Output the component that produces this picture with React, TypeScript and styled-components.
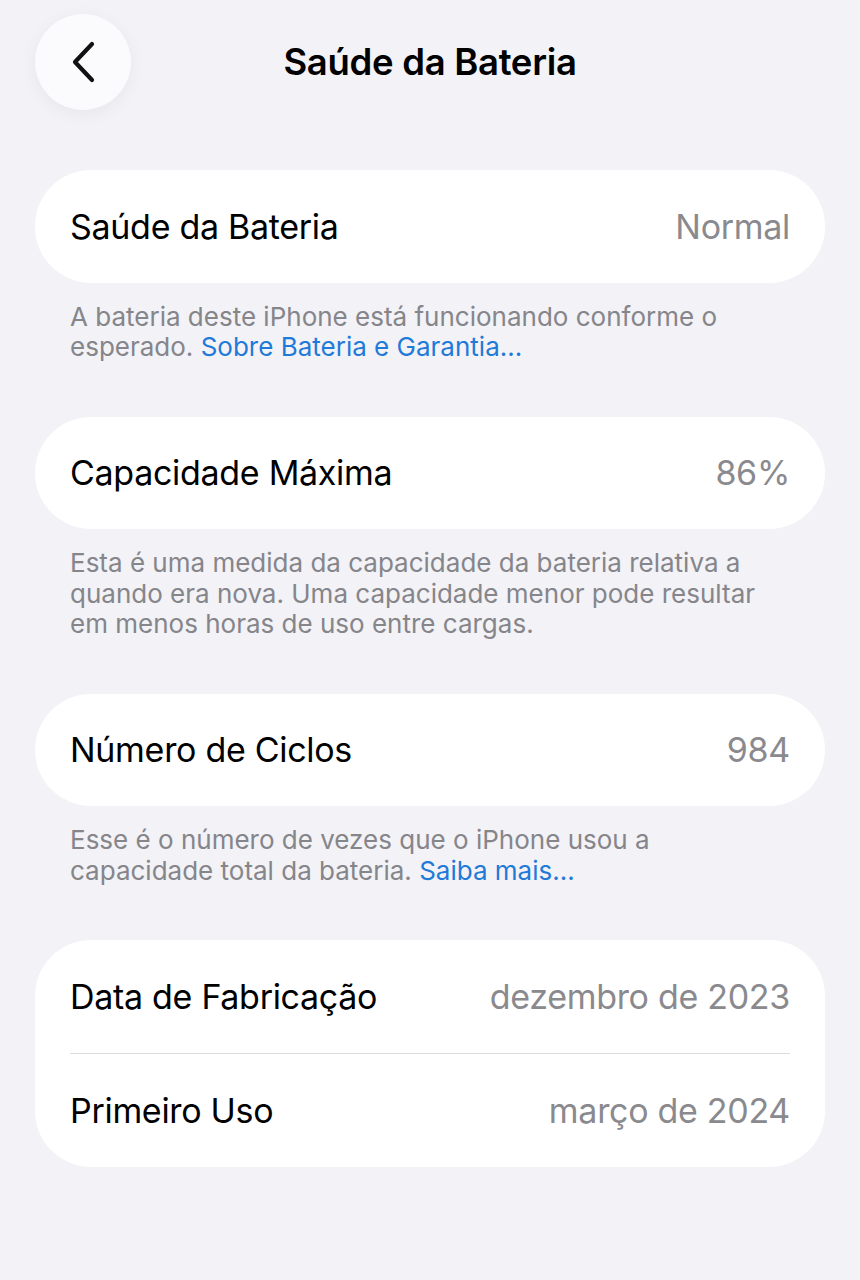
import React from 'react';
import styled, { createGlobalStyle } from 'styled-components';

const GlobalStyle = createGlobalStyle`
  html, body {
    margin: 0;
    padding: 0;
    background: #f2f2f7;
  }
  body {
    font-family: Inter, "Noto Sans", "Liberation Sans", sans-serif;
    -webkit-font-smoothing: antialiased;
  }
`;

const Page = styled.div`
  width: 860px;
  min-height: 1280px;
  background: #f2f2f7;
  box-sizing: border-box;
  padding-bottom: 40px;
`;

const Header = styled.header`
  display: grid;
  grid-template-columns: 96px 1fr 96px;
  align-items: center;
  align-content: start;
  padding: 14px 35px 0;
  height: 170px;
  box-sizing: border-box;
`;

const BackButton = styled.button`
  width: 96px;
  height: 96px;
  border-radius: 50%;
  border: 0;
  padding: 0;
  background: #fbfbfd;
  box-shadow: 0 4px 18px rgba(0, 0, 0, 0.05);
  display: flex;
  align-items: center;
  justify-content: center;
  cursor: pointer;
`;

const Title = styled.h1`
  margin: 0;
  text-align: center;
  font-size: 36.5px;
  font-weight: 600;
  letter-spacing: -0.3px;
  color: #000;
`;

const Card = styled.section`
  margin: 0 35px;
  background: #fff;
  border-radius: 56px;
  overflow: hidden;
`;

const Row = styled.div`
  height: 112.5px;
  display: flex;
  align-items: center;
  justify-content: space-between;
  padding: 0 35px;
`;

const Divider = styled.div`
  height: 1.5px;
  margin: 0 35px;
  background: #dcdce0;
`;

const Label = styled.span`
  font-size: 34px;
  color: #000;
  letter-spacing: -0.3px;
`;

const Value = styled.span`
  font-size: 34px;
  color: #8a8a8e;
  letter-spacing: -0.3px;
`;

const Footer = styled.p`
  margin: 0;
  padding: 19px 85px 54px 70px;
  font-size: 26px;
  line-height: 30.5px;
  color: #85858a;
`;

const Link = styled.a`
  color: #1f7ad8;
  text-decoration: none;
`;

const ChevronLeft = () => (
  <svg width="26" height="42" viewBox="0 0 26 42" fill="none">
    <path
      d="M22 3 L5 21 L22 39"
      stroke="#111"
      strokeWidth="4.2"
      strokeLinecap="round"
      strokeLinejoin="round"
    />
  </svg>
);

const SingleRow = ({ label, value }: { label: string; value: string }) => (
  <Card>
    <Row>
      <Label>{label}</Label>
      <Value>{value}</Value>
    </Row>
  </Card>
);

export default function App() {
  return (
    <Page>
      <GlobalStyle />
      <Header>
        <BackButton aria-label="Voltar">
          <ChevronLeft />
        </BackButton>
        <Title>Saúde da Bateria</Title>
        <span />
      </Header>

      <SingleRow label="Saúde da Bateria" value="Normal" />
      <Footer>
        A bateria deste iPhone está funcionando conforme o esperado.{' '}
        <Link href="#">Sobre Bateria e Garantia...</Link>
      </Footer>

      <SingleRow label="Capacidade Máxima" value="86%" />
      <Footer>
        Esta é uma medida da capacidade da bateria relativa a quando era nova.
        Uma capacidade menor pode resultar em menos horas de uso entre cargas.
      </Footer>

      <SingleRow label="Número de Ciclos" value="984" />
      <Footer>
        Esse é o número de vezes que o iPhone usou a capacidade total da
        bateria. <Link href="#">Saiba mais...</Link>
      </Footer>

      <Card>
        <Row>
          <Label>Data de Fabricação</Label>
          <Value>dezembro de 2023</Value>
        </Row>
        <Divider />
        <Row>
          <Label>Primeiro Uso</Label>
          <Value>março de 2024</Value>
        </Row>
      </Card>
    </Page>
  );
}
